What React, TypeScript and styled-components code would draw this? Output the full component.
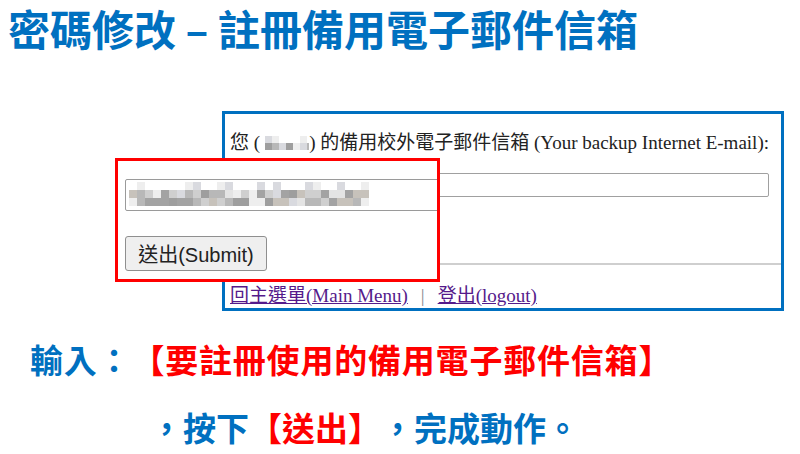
import React from 'react'
import styled, { createGlobalStyle } from 'styled-components'

const GlobalStyle = createGlobalStyle`
  html, body {
    margin: 0;
    padding: 0;
    background: #ffffff;
  }
`

const BLUE = '#0070c0'
const RED = '#ff0000'
const CJK = '"Noto Sans CJK TC", "Noto Sans", sans-serif'

const Page = styled.div`
  position: relative;
  width: 800px;
  height: 454px;
  overflow: hidden;
  background: #ffffff;
  font-family: ${CJK};
  text-spacing-trim: space-all;
`

const Title = styled.h1`
  margin: 0;
  padding: 0 0 0 8px;
  font-size: 42px;
  line-height: 56px;
  font-weight: 700;
  color: ${BLUE};
  white-space: nowrap;
`

const Stage = styled.div`
  padding: 55px 0 0 222px;
`

const BrowserBox = styled.div`
  box-sizing: border-box;
  width: 562px;
  height: 200px;
  border: 3px solid ${BLUE};
  padding: 0 12px 0 5px;
  font-family: "Liberation Serif", "Noto Sans CJK TC", serif;
  font-size: 19px;
  color: #222;
`

const Label = styled.div`
  margin-top: 18px;
  line-height: 22px;
  white-space: nowrap;
  display: flex;
  align-items: center;
`

const PlainInput = styled.div`
  margin-top: 19px;
  height: 24px;
  box-sizing: border-box;
  border: 1px solid #a0a0a0;
  border-radius: 2px;
`

const Rule = styled.div`
  margin: 66px -12px 0 -5px;
  border-top: 2px solid #cfcfcf;
`

const Links = styled.div`
  margin-top: 20px;
  line-height: 22px;
  white-space: nowrap;
`

const Link = styled.a`
  color: #551a8b;
  text-decoration: underline;
`

const Divider = styled.span`
  color: #8a8a8a;
  margin: 0 13px;
`

const ZoomBox = styled.div`
  position: absolute;
  left: 115px;
  top: 158px;
  box-sizing: border-box;
  width: 325px;
  height: 124px;
  border: 3px solid ${RED};
  background: #ffffff;
  overflow: hidden;
  padding: 18px 0 0 7px;
`

const ZoomInput = styled.div`
  box-sizing: border-box;
  width: 420px;
  height: 32px;
  border: 1px solid #9a9a9a;
  border-radius: 2px;
  padding: 2px 0 0 3px;
`

const ZoomButton = styled.button`
  display: block;
  margin-top: 25px;
  width: 142px;
  height: 35px;
  box-sizing: border-box;
  background: #efefef;
  border: 1px solid #8f8f8f;
  border-radius: 3px;
  font-family: "Liberation Sans", "Noto Sans CJK TC", sans-serif;
  font-size: 20px;
  color: #222;
  padding: 0;
`

const Caption = styled.p<{ $indent: number; $gap: number; $spacing?: number }>`
  margin: ${(p) => p.$gap}px 0 0 ${(p) => p.$indent}px;
  font-size: 33px;
  line-height: 40px;
  font-weight: 700;
  letter-spacing: ${(p) => p.$spacing ?? 0}px;
  color: ${BLUE};
  white-space: nowrap;
`

const Hot = styled.span`
  color: ${RED};
`

const GRAYS = ['#e4e4e4', '#cfcfcf', '#b8b8b8', '#a3a3a3', '#d9dadf', '#c7c2bb', '#9e9e9e', '#eeeeee']

// pixelated (blurred) private text, drawn as a mosaic
const Mosaic = ({ cols, rows, cell, seed }: { cols: number; rows: number; cell: number; seed: number }) => {
  const rects = []
  let s = seed
  for (let r = 0; r < rows; r++) {
    for (let c = 0; c < cols; c++) {
      s = (s * 9301 + 49297) % 233280
      const v = s / 233280
      if (r === 0 && v < 0.55) continue
      const color = r === 0 ? GRAYS[(c + seed) % 2 === 0 ? 7 : 4] : GRAYS[Math.floor(v * GRAYS.length)]
      rects.push(<rect key={`${r}-${c}`} x={c * cell} y={r * cell} width={cell} height={cell} fill={color} />)
    }
  }
  return (
    <svg width={cols * cell} height={rows * cell}>
      {rects}
    </svg>
  )
}

const App = (): JSX.Element => {
  return (
    <Page>
      <GlobalStyle />
      <Title>密碼修改 – 註冊備用電子郵件信箱</Title>

      <Stage>
        <BrowserBox>
          <Label>
            您 (&nbsp;<Mosaic cols={8} rows={2} cell={7} seed={11} />) 的備用校外電子郵件信箱 (Your backup Internet E-mail):
          </Label>
          <PlainInput />
          <Rule />
          <Links>
            <Link href="#">回主選單(Main Menu)</Link>
            <Divider>|</Divider>
            <Link href="#">登出(logout)</Link>
          </Links>
        </BrowserBox>
      </Stage>

      <ZoomBox>
        <ZoomInput>
          <Mosaic cols={30} rows={3} cell={8} seed={7} />
        </ZoomInput>
        <ZoomButton>送出(Submit)</ZoomButton>
      </ZoomBox>

      <Caption $indent={30} $gap={28} $spacing={0.8}>
        輸入：<Hot>【要註冊使用的備用電子郵件信箱】</Hot>
      </Caption>
      <Caption $indent={150} $gap={28}>
        ，按下<Hot>【送出】</Hot>，完成動作。
      </Caption>
    </Page>
  )
}

export default App
